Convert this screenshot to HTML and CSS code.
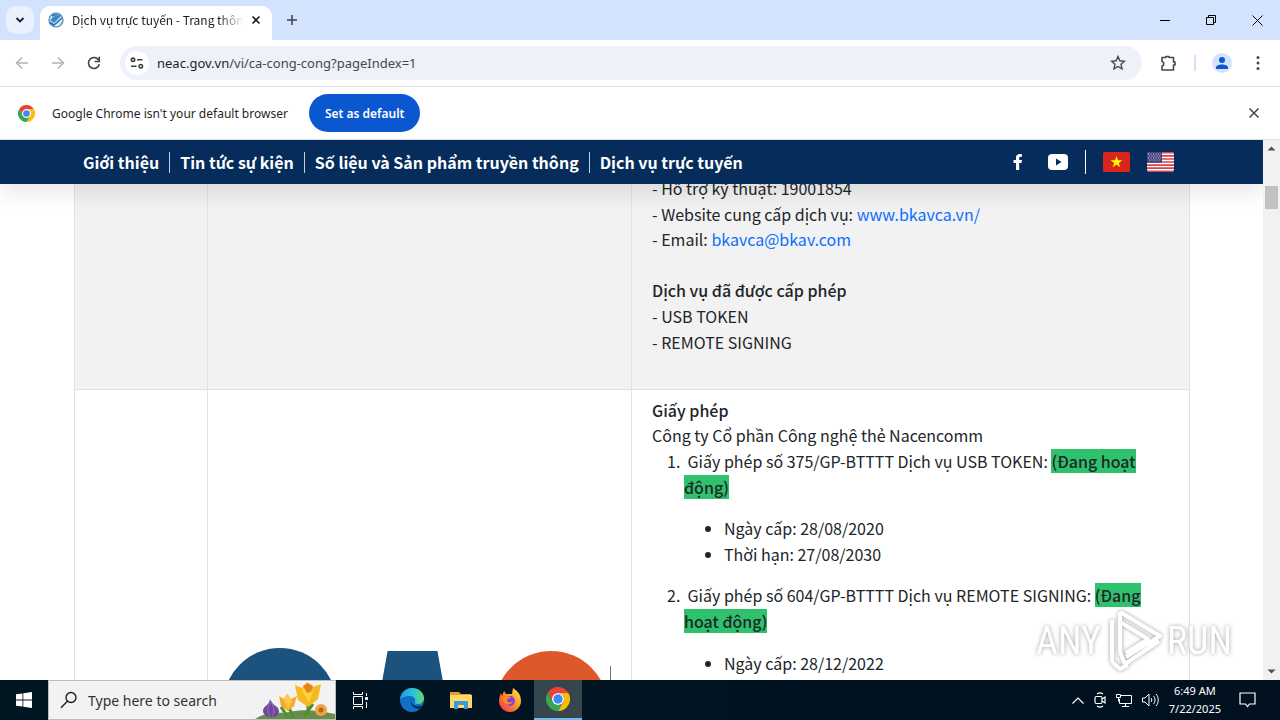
FILE: index.html
```html
<!DOCTYPE html>
<html lang="vi">
<head>
<meta charset="utf-8">
<title>Dịch vụ trực tuyến</title>
<link rel="stylesheet" href="styles.css">
</head>
<body>
<svg class="defs" aria-hidden="true">
  <symbol id="chrome" viewBox="0 0 48 48">
    <path fill="#ea4335" d="M3.2 12A24 24 0 0 1 44.8 12H24a12 12 0 0 0-10.4 18z"/>
    <path fill="#fbbc04" d="M44.8 12A24 24 0 0 1 24 48L34.4 30A12 12 0 0 0 24 12z"/>
    <path fill="#34a853" d="M24 48A24 24 0 0 1 3.2 12L13.6 30A12 12 0 0 0 34.4 30z"/>
    <circle cx="24" cy="24" r="12" fill="#fff"/><circle cx="24" cy="24" r="9.3" fill="#4285f4"/>
  </symbol>
</svg>
<div class="screen">
  <header class="tabstrip">
    <button class="tab-search" aria-label="Search tabs"><svg width="10" height="10" viewBox="0 0 10 10"><path d="M1.5 3l3.5 3.5L8.500 3" fill="none" stroke="#1f1f1f" stroke-width="1.8"/></svg></button>
    <div class="tab">
      <svg width="16" height="16" viewBox="0 0 16 16"><circle cx="8" cy="8" r="7" fill="#dcebf7" stroke="#3f82bd" stroke-width="1.200"/><path d="M2 8l4 3 7-7-2-2-6 3z" fill="#3d87c7"/><path d="M2 10.500l4 2.500 8-7M4 4l5-2" fill="none" stroke="#2769a8" stroke-width="1.500"/></svg>
      <span class="tab-title">Dịch vụ trực tuyến - Trang thôn</span>
      <button class="icon-btn" aria-label="Close tab"><svg width="10" height="10" viewBox="0 0 10 10"><path d="M1.500 1.500l7 7M8.500 1.500l-7 7" stroke="#1f1f1f" stroke-width="1.600"/></svg></button>
    </div>
    <button class="icon-btn new-tab" aria-label="New tab"><svg width="12" height="12" viewBox="0 0 12 12"><path d="M6 1v10M1 6h10" stroke="#41464d" stroke-width="1.600"/></svg></button>
    <div class="window-buttons">
      <button class="icon-btn" aria-label="Minimize"><svg width="10" height="10" viewBox="0 0 10 10"><path d="M0 5.500h10" stroke="#000"/></svg></button>
      <button class="icon-btn" aria-label="Restore"><svg width="10" height="10" viewBox="0 0 10 10"><path d="M.5 2.500h7v7h-7zM2.500 2.500v-2h7v7h-2" fill="none" stroke="#000"/></svg></button>
      <button class="icon-btn" aria-label="Close"><svg width="11" height="11" viewBox="0 0 11 11"><path d="M.5.5l10 10M10.500.5l-10 10" stroke="#000"/></svg></button>
    </div>
  </header>

  <div class="toolbar">
    <button class="icon-btn" aria-label="Back"><svg width="14" height="14" viewBox="0 0 14 14"><path d="M13 7H2M7 1.500L1.500 7 7 12.500" fill="none" stroke="#b0b3b7" stroke-width="1.500"/></svg></button>
    <button class="icon-btn" aria-label="Forward"><svg width="14" height="14" viewBox="0 0 14 14"><path d="M1 7h11M7 1.500L12.500 7 7 12.500" fill="none" stroke="#b0b3b7" stroke-width="1.500"/></svg></button>
    <button class="icon-btn" aria-label="Reload"><svg width="14" height="14" viewBox="0 0 14 14"><path d="M12.300 8.200A5.500 5.500 0 1 1 11.600 4" fill="none" stroke="#3c4043" stroke-width="1.600"/><path d="M12.300.8v4.700H7.600" fill="none" stroke="#3c4043" stroke-width="1.600"/></svg></button>
    <div class="omnibox">
      <button class="site-info" aria-label="View site information"><svg width="14" height="12" viewBox="0 0 14 12" fill="none" stroke="#3c4043" stroke-width="1.600"><circle cx="3" cy="2.800" r="1.700"/><path d="M7 2.800h5.500M1 9.200h5.500"/><circle cx="10.800" cy="9.200" r="1.700"/></svg></button>
      <div class="url" role="textbox" aria-label="Address"><span>neac.gov.vn</span>/vi/ca-cong-cong?pageIndex=1</div>
      <button class="icon-btn" aria-label="Bookmark"><svg width="16" height="16" viewBox="0 0 16 16"><path d="M8 1.500l1.900 4.300 4.600.4-3.500 3.100 1.050 4.600L8 11.500l-4.050 2.400L5 9.300 1.500 6.200l4.600-.4z" fill="none" stroke="#474747" stroke-width="1.400"/></svg></button>
    </div>
    <button class="icon-btn extensions" aria-label="Extensions"><svg width="18" height="18" viewBox="0 0 18 18"><path d="M3 3.500h4V2.500h3v1h4.500v4.500h1.500v3h-1.500v5H3v-4c2.500-.5 2.500-4 0-4.500z" fill="none" stroke="#474747" stroke-width="1.600" stroke-linejoin="round"/></svg></button>
    <span class="toolbar-rule"></span>
    <button class="profile" aria-label="Profile"><svg width="14" height="14" viewBox="0 0 14 14" fill="#0b57d0"><circle cx="7" cy="4" r="3"/><path d="M1 13v-1.500C1 9.500 4 8.500 7 8.500s6 1 6 3V13z"/></svg></button>
    <button class="icon-btn menu" aria-label="Menu"><svg width="4" height="16" viewBox="0 0 4 16" fill="#474747"><circle cx="2" cy="2.500" r="1.500"/><circle cx="2" cy="8" r="1.500"/><circle cx="2" cy="13.500" r="1.500"/></svg></button>
  </div>

  <div class="infobar">
    <svg width="17" height="17"><use href="#chrome"/></svg>
    <span>Google Chrome isn't your default browser</span>
    <button class="set-default">Set as default</button>
    <button class="icon-btn dismiss" aria-label="Dismiss"><svg width="12" height="12" viewBox="0 0 12 12"><path d="M1.500 1.500l9 9M10.500 1.500l-9 9" stroke="#474747" stroke-width="1.500"/></svg></button>
  </div>

  <div class="viewport">
    <div class="page">
      <nav class="site-nav">
        <div class="nav-links">
          <a href="#">Giới thiệu</a><a href="#">Tin tức sự kiện</a><a href="#">Số liệu và Sản phẩm truyền thông</a><a href="#">Dịch vụ trực tuyến</a>
        </div>
        <div class="nav-social">
          <a href="#" aria-label="Facebook"><svg width="10" height="16" viewBox="0 0 10 16"><path d="M3 16V9H.5V6H3V4c0-2.600 1.500-4 3.900-4L9 .2v2.600H7.800C6.500 2.800 6.200 3.400 6.200 4.200V6H9l-.5 3H6.200v7z" fill="#fff"/></svg></a>
          <a href="#" aria-label="YouTube"><svg width="20" height="16" viewBox="0 0 20 16"><rect width="20" height="16" rx="4" fill="#fff"/><path d="M8 4.500v7L13.500 8z" fill="#052c5b"/></svg></a>
          <span class="nav-rule"></span>
          <a href="#" aria-label="Tiếng Việt"><svg width="27" height="20" viewBox="0 0 27 20"><rect width="27" height="20" rx="1.500" fill="#da251d"/><path d="M13.500 4l1.400 4.300h4.500l-3.600 2.600 1.400 4.300-3.700-2.600-3.700 2.600 1.400-4.300-3.600-2.600h4.500z" fill="#ff0"/></svg></a>
          <a href="#" aria-label="English"><svg width="27" height="20" viewBox="0 0 27 20"><clipPath id="us"><rect width="27" height="20" rx="3"/></clipPath><g clip-path="url(#us)"><path fill="#fff" d="M0 0h27v20H0z"/><path stroke="#d8434e" stroke-width="1.600" d="M0 .8h27M0 3.900h27M0 7h27M0 10h27M0 13.100h27M0 16.100h27M0 19.200h27"/><path fill="#46467f" d="M0 0h15v10.800H0z"/><path d="M1 2h13M2 4h12M1 6h13M2 8h12" stroke="#c5c6dc" stroke-dasharray="1 1.500"/></g></svg></a>
        </div>
      </nav>
      <main class="content">
        <table class="providers">
          <colgroup><col class="col-no"><col><col class="col-info"></colgroup>
          <tr class="shaded">
            <td></td><td></td>
            <td>
              <div>- Hỗ trợ kỹ thuật: 19001854</div>
              <div>- Website cung cấp dịch vụ: <a href="#">www.bkavca.vn/</a></div>
              <div>- Email: <a href="#">bkavca@bkav.com</a></div>
              <br>
              <div><strong>Dịch vụ đã được cấp phép</strong></div>
              <div>- USB TOKEN</div>
              <div>- REMOTE SIGNING</div>
              <br>
            </td>
          </tr>
          <tr>
            <td></td>
            <td class="logo-cell">
              <svg class="logo" viewBox="0 0 384 120" role="img" aria-label="CA2"><circle cx="52" cy="57" r="57" fill="#1c527e"/><path d="M160 3h50l21 117h-92z" fill="#1c527e"/><circle cx="324" cy="60" r="57" fill="#dd582a"/><path d="M383.500 18v102" stroke="#777" stroke-width="1"/></svg>
            </td>
            <td>
              <div><strong>Giấy phép</strong></div>
              <div>Công ty Cổ phần Công nghệ thẻ Nacencomm</div>
              <ol>
                <li>&nbsp;Giấy phép số 375/GP-BTTTT Dịch vụ USB TOKEN: <strong class="active">(Đang hoạt động)</strong>
                  <ul><li>Ngày cấp: 28/08/2020</li><li>Thời hạn: 27/08/2030</li></ul>
                </li>
                <li>&nbsp;Giấy phép số 604/GP-BTTTT Dịch vụ REMOTE SIGNING: <strong class="active">(Đang hoạt động)</strong>
                  <ul><li>Ngày cấp: 28/12/2022</li></ul>
                </li>
              </ol>
            </td>
          </tr>
        </table>
      </main>
    </div>
    <div class="scrollbar">
      <svg width="17" height="17" viewBox="0 0 17 17"><path d="M4.500 10.500h8l-4-4z" fill="#505050"/></svg>
      <div class="thumb"></div>
      <svg class="down" width="17" height="17" viewBox="0 0 17 17"><path d="M4.500 6.500h8l-4 4z" fill="#505050"/></svg>
    </div>
    <div class="watermark">
      <span>ANY</span>
      <svg width="62" height="66" viewBox="0 0 62 66" fill="none" stroke="#fff" stroke-width="4" stroke-linejoin="round"><path d="M17 4v40M17 4l40 24-34 21M9 12v42M17 44l5 12 34-23M9 54l8 7 8-4M17 14l28 17-22 14"/></svg>
      <span>RUN</span>
    </div>
  </div>

  <footer class="taskbar">
    <button class="task start" aria-label="Start"><svg width="16" height="16" viewBox="0 0 16 16" fill="#fff"><path d="M0 2.300L6.500 1.400v6.200H0zM7.300 1.300L16 0v7.600H7.300zM0 8.400h6.500v6.200L0 13.700zM7.300 8.400H16V16l-8.700-1.300z"/></svg></button>
    <label class="search">
      <svg width="18" height="18" viewBox="0 0 18 18" fill="none" stroke="#1a1a1a" stroke-width="1.300"><circle cx="11" cy="6.500" r="5"/><path d="M7.400 10.300L1 16.800"/></svg>
      <input type="text" placeholder="Type here to search" aria-label="Search">
      <svg class="flowers" width="80" height="38" viewBox="0 0 80 38">
        <path d="M0 38c12-8 24-5 34-7 14-3 28-2 46 2v5z" fill="#688e4b"/>
        <path d="M53 22v12M33 25l6 12M58 23l-9 12M26 26l7 10" stroke="#4e8f34" stroke-width="3"/>
        <path d="M15 18c1 6 9 7 9 12s-3 6-8 6-8-3-8-6c0-5 6-5 7-12z" fill="#71479c"/><path d="M15 20c-3 8-3 11 0 15m1-15c4 8 4 11 1 15" stroke="#9b70bd" fill="none"/>
        <path d="M24 15l5 3 3-5 4 5 6-3-3 10-6 5-7-5z" fill="#f5ae28"/><path d="M29 19l4-6 4 7-4 8z" fill="#ffc94b"/>
        <path d="M40 4l7 3 5-6 6 5 8-3-3 15-10 8-10-7z" fill="#f8b81f"/><path d="M47 9l6-7 5 8-4 12z" fill="#ffd33d"/><path d="M48 5l5-3 5 3-2 6-4 1z" fill="#e7831c"/>
        <circle cx="66" cy="29" r="6" fill="#f4a342"/><circle cx="66" cy="29" r="2.500" fill="#b96121"/>
      </svg>
    </label>
    <button class="task task-view" aria-label="Task view"><svg width="17" height="17" viewBox="0 0 17 17" fill="none" stroke="#fff"><path d="M1.500 0v2.500h9V0M1.500 17v-2.500h9V17M1.500 4.500h9v8h-9zM14.500 1v3M14.500 10v6"/><path d="M13.500 5.500h2v2h-2z" fill="#fff"/></svg></button>
    <button class="task" aria-label="Edge"><svg width="24" height="24" viewBox="0 0 24 24"><defs><linearGradient id="eg" x1="0" x2="1"><stop stop-color="#1c9ce0"/><stop offset=".6" stop-color="#2fc3d2"/><stop offset="1" stop-color="#64dc65"/></linearGradient></defs><circle cx="12" cy="12" r="12" fill="#1470c6"/><path d="M0 11C1 4 6 0 12 0c7 0 12 5 12 10 0 4-3 6-6 6-3 0-4-1-3-2 1-3-1-6-5-6-5 0-9 2-10 3z" fill="url(#eg)"/><path d="M12 10c-2 4 0 7 4 8 3 .7 5 0 7-1-1 2-2 3-4 4-5 0-9-4-8-9z" fill="#00304f"/></svg></button>
    <button class="task" aria-label="File Explorer"><svg width="22" height="19" viewBox="0 0 22 19"><path d="M0 1h9l2 2h10v5H0z" fill="#e5a126"/><path d="M0 4h22v13H0z" fill="#ffd76b"/><path d="M4 10h14v8h-4v-4H8v4H4z" fill="#3e9ad7"/></svg></button>
    <button class="task" aria-label="Firefox"><svg width="24" height="24" viewBox="0 0 24 24"><defs><linearGradient id="ff" x1="1" y1="0" x2="0" y2="1"><stop stop-color="#fff04a"/><stop offset=".5" stop-color="#ff8b24"/><stop offset="1" stop-color="#f82460"/></linearGradient></defs><path d="M3 5l1 3 2-5 2 3 6 0 1-6c4 3 8 6 8 13 0 6-5 11-11 11S1 19 1 13c0-3 1-6 2-8z" fill="url(#ff)"/><circle cx="12" cy="13" r="5" fill="#7e42dc"/><path d="M4 9c4-3 6 0 9 0-1 2-3 1-4 3 0 3 4 3 6 1-1 4-6 5-9 1" fill="#ff8a21"/></svg></button>
    <button class="task current" aria-label="Chrome"><svg width="24" height="24"><use href="#chrome"/></svg></button>
    <div class="tray">
      <svg width="12" height="7" viewBox="0 0 12 7" fill="none" stroke="#fff" stroke-width="1.200"><path d="M.5 6.500L6 1l5.500 5.500"/></svg>
      <svg width="12" height="16" viewBox="0 0 12 16" fill="none" stroke="#fff" stroke-width="1.200"><rect x="1" y="4.500" width="7" height="7" rx="1.500"/><path d="M8 7l3-2v6L8 9M3 2c2-1.500 4-1.500 6 0M3 14c2 1.500 4 1.500 6 0"/></svg>
      <svg width="16" height="14" viewBox="0 0 16 14" fill="none" stroke="#fff"><path d="M5 2.500h10.500v8H3.500V6M9.500 10.500v3M6 13.500h7M.5 1.500h4v3h-4zM2.500 4.500v4"/></svg>
      <svg width="17" height="14" viewBox="0 0 17 14" fill="none" stroke="#fff"><path d="M.5 5h2.500l4-4v12l-4-4H.5zM9 5c1 1 1 3 0 4M11.500 3c2 2 2 6 0 8M14 1c3 3 3 9 0 12"/></svg>
      <time class="clock"><span>6:49 AM</span><span>7/22/2025</span></time>
      <svg class="notify" width="17" height="16" viewBox="0 0 17 16" fill="none" stroke="#fff" stroke-width="1.200"><path d="M1 1h15v11h-5.500L8.500 14.500 6.500 12H1z"/></svg>
    </div>
  </footer>
</div>
</body>
</html>
```
FILE: styles.css
```css
* { box-sizing: border-box; }
body { margin: 0; font-family: "Noto Sans", "Open Sans", sans-serif; font-size: 12px; color: #1f1f1f; }
button { border: 0; padding: 0; background: none; font: inherit; color: inherit; }
svg { display: block; flex: none; }
.defs { position: absolute; width: 0; height: 0; }
.screen { display: flex; flex-direction: column; height: 100vh; overflow: hidden; background: #fff; }
.icon-btn { display: flex; align-items: center; justify-content: center; width: 20px; height: 20px; flex: none; }

.tabstrip { display: flex; align-items: center; height: 40px; padding-left: 6px; background: #d3e3fd; flex: none; }
.tab-search { display: flex; align-items: center; justify-content: center; width: 28px; height: 28px; border-radius: 10px; background: #e9f1fe; }
.tab { display: flex; align-items: center; align-self: flex-end; gap: 8px; width: 232px; height: 34px; margin-left: 6px; padding: 0 6px 6px 8px; border-radius: 10px 10px 0 0; background: #fff; }
.tab-title { flex: 1; min-width: 0; margin-right: -6px; overflow: hidden; white-space: nowrap; font-family: "Noto Sans CJK SC", sans-serif; line-height: 20px; -webkit-mask-image: linear-gradient(90deg, #000 85%, transparent); mask-image: linear-gradient(90deg, #000 85%, transparent); }
.new-tab { margin-left: 10px; }
.window-buttons { display: flex; margin-left: auto; }
.window-buttons .icon-btn { width: 46px; height: 40px; }

.toolbar { display: flex; align-items: center; height: 47px; padding: 0 12px; border-bottom: 1px solid #dfe1e5; flex: none; gap: 16px; }
.omnibox { display: flex; align-items: center; flex: 1; height: 34px; padding: 0 14px 0 5px; border-radius: 17px; background: #edf1fa; }
.site-info { display: flex; align-items: center; justify-content: center; width: 24px; height: 24px; border-radius: 50%; background: #fff; }
.url { flex: 1; margin-left: 8px; font-size: 13px; line-height: 20px; color: #474747; }
.url span { color: #1f1f1f; }
.toolbar-rule { width: 2px; height: 16px; background: #d3e3fd; }
.profile { display: flex; align-items: center; justify-content: center; width: 20px; height: 20px; border-radius: 50%; background: #d3e3fd; }

.infobar { display: flex; align-items: center; gap: 17px; height: 53px; padding: 0 16px 0 18px; border-bottom: 1px solid #dfe1e5; flex: none; }
.set-default { height: 38px; margin-left: 4px; padding: 0 16px; border-radius: 19px; background: #0b57d0; color: #fff; font-weight: 600; }
.dismiss { margin-left: auto; }

.viewport { position: relative; display: flex; flex: 1; min-height: 0; }
.page { flex: 1; min-width: 0; overflow: hidden; font-family: "Noto Sans CJK SC", "Noto Sans", sans-serif; font-size: 16px; line-height: 1.6; color: #212529; }
.page a { color: #0d6efd; text-decoration: none; }
.site-nav { position: relative; z-index: 1; display: flex; align-items: center; justify-content: space-between; height: 44px; padding: 0 89px 0 73px; background: #052c5b; box-shadow: 0 8px 24px rgba(0, 0, 0, .1); font-weight: 700; line-height: 21px; }
.nav-links, .nav-social { display: flex; align-items: center; }
.page .nav-links a { padding: 0 10px; color: #fff; }
.nav-links a + a { border-left: 1px solid #c5d0dd; }
.nav-social { gap: 17px; }
.nav-social a:first-child { margin-right: 8px; }
.nav-rule { width: 1px; height: 24px; background: #fff; }
.content { padding: 0 73px 0 74px; margin-top: -17px; }
.providers { width: 100%; table-layout: fixed; border-collapse: collapse; }
.col-no { width: 12%; }
.col-logo { width: 38%; }
.col-no { width: 133px; }
.col-info { width: 558px; }
.providers td { padding: 8px 20px; border: 1px solid #dee2e6; vertical-align: top; }
.shaded { background: #f2f2f2; }
.providers .logo-cell { padding-top: 258px; }
.logo { width: 100%; overflow: visible; }
strong { font-weight: 500; }
ol { margin: 0; padding-left: 32px; }
ul { margin: 16px 0; padding-left: 40px; list-style: disc; }
.active { background: #2dc26b; }

.scrollbar { display: flex; flex-direction: column; width: 17px; background: #f1f1f1; flex: none; }
.thumb { width: 13px; height: 23px; margin: 29px auto 0; background: #c1c1c1; }
.down { margin-top: auto; }
.watermark { position: absolute; right: 48px; bottom: 6px; z-index: 2; display: flex; align-items: center; gap: 2px; opacity: .8; color: #fff; font: 38px "Roboto Condensed", "Liberation Sans", sans-serif; text-shadow: 0 0 4px #888; }
.watermark svg { filter: drop-shadow(0 0 2px #888); }

.taskbar { display: flex; height: 40px; flex: none; background: linear-gradient(90deg, #001722, #00101f); color: #fff; }
.task { display: flex; align-items: center; justify-content: center; width: 49px; }
.start { width: 48px; }
.task-view { margin-right: 2px; }
.current { width: 48px; background: #35464f; border-bottom: 2px solid #76b9ed; }
.search { display: flex; align-items: center; width: 288px; padding-left: 11px; border: 1px solid #bbb; background: #f2f2f2; }
.search input { flex: 1; min-width: 0; margin-left: 10px; padding: 0; border: 0; background: none; font: 14px "Noto Sans", sans-serif; }
.search input::placeholder { color: #333; opacity: 1; }
.flowers { align-self: flex-end; }
.tray { display: flex; align-items: center; gap: 10px; margin-left: auto; padding-right: 24px; }
.clock { display: flex; flex-direction: column; align-items: center; font-size: 11px; line-height: 18px; }
.notify { margin-left: 8px; }
```
